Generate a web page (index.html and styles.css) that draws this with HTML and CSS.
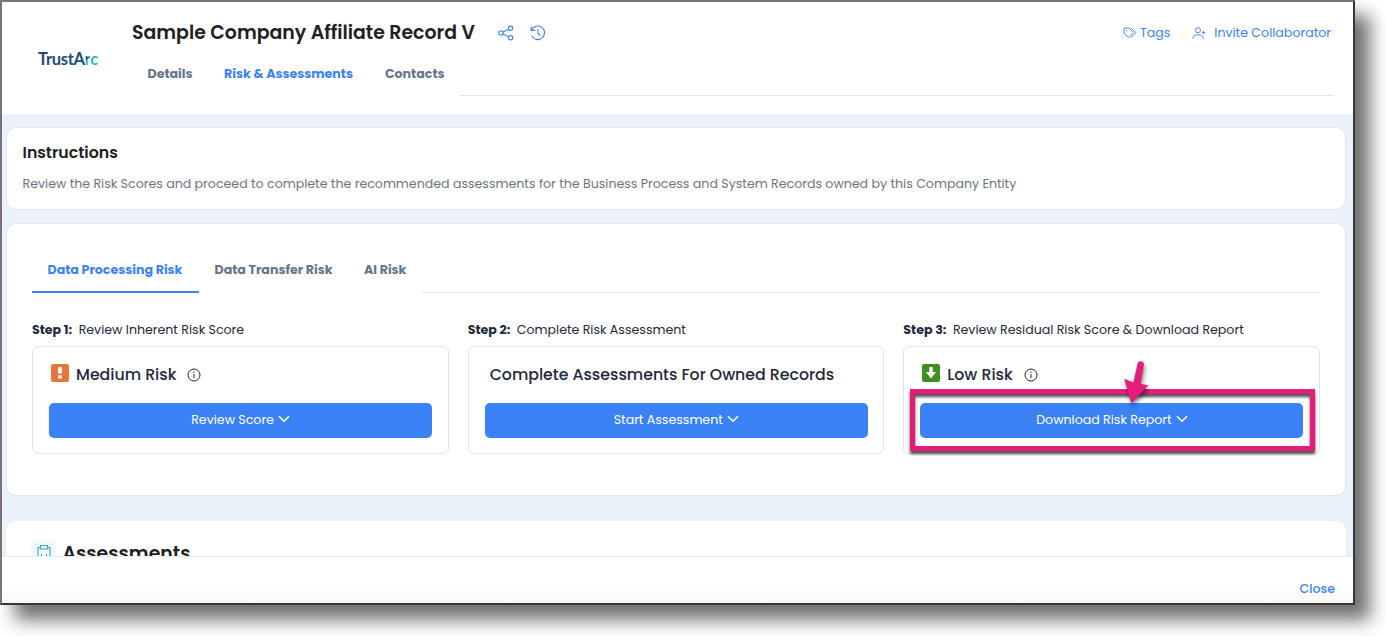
FILE: index.html
```html
<!DOCTYPE html>
<html lang="en">
<head>
  <meta charset="UTF-8" />
  <meta name="viewport" content="width=device-width, initial-scale=1.0" />
  <title>Sample Company Affiliate Record V</title>
  <link rel="stylesheet" href="styles.css">
</head>
<body>
  <div class="window">
    <header class="header">
      <div class="logo">TrustA<span class="logo-r">r</span><span class="logo-c">c</span></div>
      <div class="header-main">
        <div class="title-row">
          <h1>Sample Company Affiliate Record V</h1>
          <svg class="icon share" width="16" height="16" viewBox="0 0 16 16">
            <circle cx="3" cy="8" r="2.2"/><circle cx="12.5" cy="3.3" r="2.2"/><circle cx="12.5" cy="12.7" r="2.2"/>
            <path d="M5 7l5.5-2.7M5 9l5.5 2.7"/>
          </svg>
          <svg class="icon history" width="16" height="16" viewBox="0 0 16 16">
            <path d="M1.2 1.4v4h4M1.5 5.2A6.8 6.8 0 1 1 1.6 10.6M8 4.2v4.3l2.2 1.7"/>
          </svg>
          <div class="actions">
            <a href="#" class="tags">
              <svg class="icon" width="14" height="12" viewBox="0 0 14 12">
                <path d="M1 1h5l4.400 4.600-4.600 5L1 6.300zM8 1l5 4.600-5 5.200"/><circle cx="3.4" cy="3.4" r=".4"/>
              </svg>
              <span>Tags</span>
            </a>
            <a href="#" class="invite">
              <svg class="icon" width="14" height="12" viewBox="0 0 14 12">
                <circle cx="6" cy="3.2" r="2.5"/><path d="M.8 11.600c.2-5.200 10.400-5.200 10.600 0M11.500 3.800v3.600M9.700 5.600h3.600"/>
              </svg>
              <span>Invite Collaborator</span>
            </a>
          </div>
        </div>
        <nav class="tabs top-tabs">
          <a href="#" class="tab t-details">Details</a>
          <a href="#" class="tab t-risk active">Risk &amp; Assessments</a>
          <a href="#" class="tab t-contacts">Contacts</a>
          <span class="tab-line"></span>
        </nav>
      </div>
    </header>

    <main class="content">
      <section class="card instructions">
        <h2>Instructions</h2>
        <p>Review the Risk Scores and proceed to complete the recommended assessments for the Business Process and System Records owned by this Company Entity</p>
      </section>

      <section class="card risk">
        <nav class="tabs risk-tabs">
          <a href="#" class="tab t-processing active">Data Processing Risk</a>
          <a href="#" class="tab t-transfer">Data Transfer Risk</a>
          <a href="#" class="tab t-ai">AI Risk</a>
          <span class="tab-line"></span>
        </nav>
        <div class="steps">
          <div class="step">
            <p class="step-label"><strong>Step 1:</strong><span>Review Inherent Risk Score</span></p>
            <div class="step-box">
              <div class="step-title">
                <svg class="level" width="18" height="18" viewBox="0 0 18 18">
                  <rect width="18" height="18" rx="2" fill="#e77738"/>
                  <path d="M7.2 3h3.6v6.5H7.2zM7.2 11.2h3.6v3.4H7.2z" fill="#fff"/>
                </svg>
                <span>Medium Risk</span>
                <svg class="info" width="14" height="14" viewBox="0 0 14 14">
                  <circle cx="7" cy="7" r="6"/><path d="M7 6v4.2M7 3.6v1.3"/>
                </svg>
              </div>
              <button class="btn"><span>Review Score</span><svg width="12" height="8" viewBox="0 0 12 8"><path d="M1 1.2l5 5 5-5"/></svg></button>
            </div>
          </div>
          <div class="step">
            <p class="step-label"><strong>Step 2:</strong><span>Complete Risk Assessment</span></p>
            <div class="step-box">
              <div class="step-title plain"><span>Complete Assessments For Owned Records</span></div>
              <button class="btn"><span>Start Assessment</span><svg width="12" height="8" viewBox="0 0 12 8"><path d="M1 1.2l5 5 5-5"/></svg></button>
            </div>
          </div>
          <div class="step">
            <p class="step-label"><strong>Step 3:</strong><span>Review Residual Risk Score &amp; Download Report</span></p>
            <div class="step-box">
              <div class="step-title">
                <svg class="level" width="18" height="18" viewBox="0 0 18 18">
                  <rect width="18" height="18" rx="2" fill="#3f8f22"/>
                  <path d="M7.3 3h3.4v5H14l-5 6.4L4 8h3.3z" fill="#fff"/>
                </svg>
                <span>Low Risk</span>
                <svg class="info" width="14" height="14" viewBox="0 0 14 14">
                  <circle cx="7" cy="7" r="6"/><path d="M7 6v4.2M7 3.6v1.3"/>
                </svg>
              </div>
              <button class="btn"><span>Download Risk Report</span><svg width="12" height="8" viewBox="0 0 12 8"><path d="M1 1.2l5 5 5-5"/></svg></button>
              <div class="highlight"></div>
              <svg class="arrow" width="26" height="44" viewBox="0 0 26 44">
                <path d="M14.400 3.200C15-1.400 21.600-.4 20.900 4L17.600 22.800 25.200 24.400 8.300 42.400 1.200 17.800 10.400 21.600z"/>
              </svg>
            </div>
          </div>
        </div>
      </section>

      <section class="card assessments">
        <span class="clip-icon">
          <svg width="16" height="18" viewBox="0 0 16 18">
            <path d="M4.500 3.500H2V17h12V3.500h-2.500M4.500 1.500h7v3.500h-7zM5.500 10v2M10.500 10v2M8 12v1"/>
          </svg>
        </span>
        <h2>Assessments</h2>
      </section>
    </main>

    <footer class="footer"><a href="#">Close</a></footer>
  </div>
</body>
</html>
```
FILE: styles.css
```css
* {
  box-sizing: border-box;
}
body {
  margin: 0;
  height: 636px;
  overflow: hidden;
  background: #fff;
  font-family: Poppins, Inter, sans-serif;
  font-size: 12.6px;
  color: #1e293b;
}
h1, h2, p {
  margin: 0;
  white-space: nowrap;
}
a {
  color: #3b82f6;
  text-decoration: none;
  white-space: nowrap;
}
.window {
  display: flex;
  flex-direction: column;
  width: 1355px;
  height: 605px;
  border: 2px solid;
  border-color: #767475 #353638 #353638 #767475;
  background: #fff;
  box-shadow: 15px 15px 17px rgba(0, 0, 0, 0.56);
}

/* header */
.header {
  display: flex;
  flex: none;
  height: 112px;
  padding: 0 19px 0 36px;
}
.logo {
  width: 94px;
  padding-top: 46px;
  font-family: Lato, sans-serif;
  font-size: 16.5px;
  font-weight: 700;
  line-height: 22px;
  letter-spacing: -0.3px;
  color: #204a7b;
}
.logo-r {
  background: linear-gradient(135deg, #204a7b 50%, #35b5d3 50%);
  -webkit-background-clip: text;
  color: transparent;
}
.logo-c {
  color: #35b5d3;
}
.header-main {
  flex: 1;
}
.title-row {
  display: flex;
  align-items: center;
  height: 46px;
  margin-top: 8px;
}
h1 {
  font-size: 18.9px;
  font-weight: 600;
  line-height: 28px;
  color: #212121;
}
.icon {
  flex: none;
  fill: none;
  stroke: #3b82f6;
  stroke-width: 1.1;
}
.share {
  margin-left: 23px;
}
.history {
  margin-left: 16px;
}
.actions {
  display: flex;
  margin-left: auto;
  padding-right: 3px;
}
.actions a {
  display: flex;
  align-items: center;
}
.actions .icon {
  stroke-width: 0.9;
}
.tags {
  gap: 3px;
  margin-right: 22px;
}
.invite {
  gap: 8px;
}

/* tabs */
.tabs {
  display: flex;
}
.tab {
  flex: none;
  padding: 0 0 0 16px;
  font-weight: 700;
  color: #64748b;
}
.tab.active {
  color: #3b82f6;
}
.tab-line {
  flex: 1;
  border-bottom: 1px solid #dfe5f0;
}
.top-tabs {
  height: 40px;
  line-height: 35px;
}
.top-tabs .t-details {
  padding-left: 15.5px;
}
.t-details { width: 76px; }
.t-risk { width: 161px; }
.t-contacts { width: 91px; }

/* content */
.content {
  flex: 1;
  min-height: 0;
  overflow: hidden;
  padding: 13px 7px 0 4px;
  background: #eaf1fa;
}
.card {
  background: #fff;
  border: 1px solid #dfe6f0;
  border-radius: 10px;
}
.instructions {
  height: 83px;
  padding: 14px 15.5px;
}
.instructions h2 {
  font-size: 15.75px;
  font-weight: 600;
  line-height: 22px;
  color: #212121;
}
.instructions p {
  margin-top: 10px;
  line-height: 20px;
  color: #6c757d;
}
.risk {
  height: 273px;
  margin-top: 13px;
  padding: 24px 25px 0 25px;
}
.risk-tabs {
  height: 45px;
  line-height: 43px;
}
.risk-tabs .tab {
  padding-left: 15.5px;
}
.risk-tabs .active {
  border-bottom: 2px solid #3b82f6;
}
.t-processing { width: 167px; }
.t-transfer { width: 149.5px; }
.t-ai { width: 73.5px; }
.steps {
  display: grid;
  grid-template-columns: repeat(3, 1fr);
  gap: 19px;
  margin-top: 26px;
}
.step-label {
  display: flex;
  gap: 6.5px;
  height: 27px;
  line-height: 21px;
}
.step-box {
  position: relative;
  height: 108px;
  padding: 11px 15.5px 15px 16px;
  border: 1px solid #dfe6f0;
  border-radius: 6px;
}
.step-title {
  display: flex;
  align-items: center;
  height: 33px;
  padding-left: 2px;
  font-size: 15.75px;
  font-weight: 500;
  white-space: nowrap;
}
.step-title.plain {
  padding-left: 5px;
}
.level {
  margin: -3px 7px 0 0;
}
.info {
  margin: 0 0 0 11px;
  fill: none;
  stroke: #1e293b;
  stroke-width: 1;
}
.btn {
  display: flex;
  align-items: center;
  justify-content: center;
  gap: 4px;
  width: 100%;
  height: 35px;
  margin-top: 12px;
  padding: 0 0 1px;
  border: 0;
  border-radius: 5px;
  background: #3b82f6;
  color: #fff;
  font: inherit;
}
.btn svg {
  margin-top: -2px;
  fill: none;
  stroke: #fff;
  stroke-width: 1.6;
}

/* callout over the download button */
.highlight {
  position: absolute;
  top: 42px;
  left: 6px;
  width: 405px;
  height: 62px;
  border: 5px solid #e61c7c;
  filter: drop-shadow(0 3px 1.5px rgba(0, 0, 0, 0.7));
}
.arrow {
  position: absolute;
  top: 14px;
  left: 219px;
  overflow: visible;
  fill: #e61c7c;
  filter: drop-shadow(1px 3px 2px rgba(0, 0, 0, 0.5));
}

.assessments {
  display: flex;
  gap: 6.5px;
  height: 90px;
  margin: 25px 0 0;
  padding: 18px 24px;
  border-color: #fff;
}
.clip-icon {
  width: 25px;
  height: 25px;
  padding: 4px 5px;
  border-radius: 4px;
  background: #f1fafe;
}
.clip-icon svg {
  fill: none;
  stroke: #45a9c4;
  stroke-width: 1.2;
}
.assessments h2 {
  font-size: 18.9px;
  font-weight: 600;
  line-height: 28px;
  color: #212121;
}

.footer {
  display: flex;
  flex: none;
  justify-content: flex-end;
  height: 47px;
  padding: 22px 18px 0 0;
  border-top: 1px solid #e8eaed;
  background: linear-gradient(#fff 60%, #f8f8f8);
  font-weight: 500;
  line-height: 20px;
}
```
